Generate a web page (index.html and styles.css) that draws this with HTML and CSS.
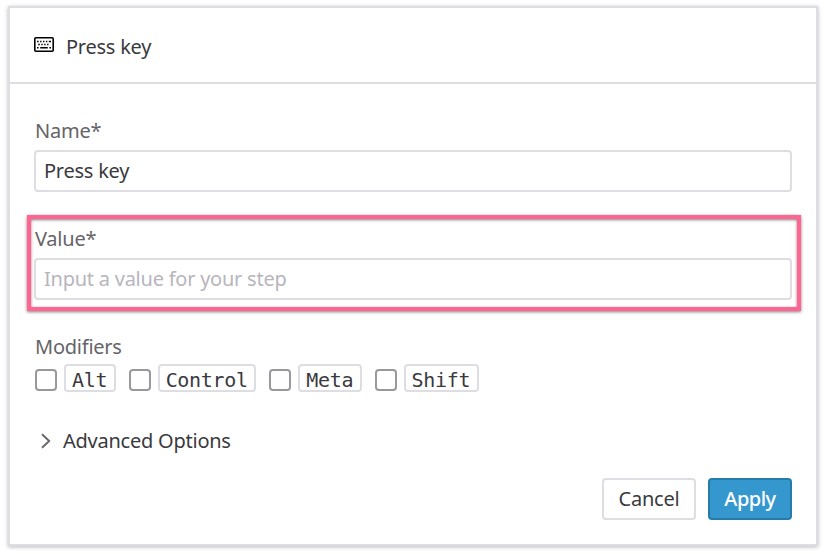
FILE: index.html
```html
<!DOCTYPE html>
<html lang="en">
<head>
<meta charset="utf-8">
<title>Press key</title>
<link rel="stylesheet" href="styles.css">
</head>
<body>
<form class="card">
  <header class="card-header">
    <svg class="keyboard" width="20" height="16" viewBox="0 0 20 16" aria-hidden="true">
      <rect x=".8" y=".8" width="18.4" height="13.4" rx="1" fill="none" stroke="#000" stroke-width="1.6"/>
      <path d="M3 4.5h1.6m1.5 0h1.4m1.5 0h1.4m1.5 0h1.4m1.5 0H17M4.2 7.5h1.6m1.5 0h1.4m1.5 0h1.4m1.5 0h1.4M3 10.8h1.6m1.6 0h7.6m1.6 0h1.6" fill="none" stroke="#000" stroke-width="1.5"/>
    </svg>
    <h1 class="title">Press key</h1>
  </header>
  <div class="card-body">
    <div class="field">
      <label class="label" for="name">Name*</label>
      <input class="input" id="name" type="text" value="Press key">
    </div>
    <div class="field highlighted">
      <label class="label" for="value">Value*</label>
      <input class="input" id="value" type="text" placeholder="Input a value for your step">
    </div>
    <div class="label">Modifiers</div>
    <div class="modifiers">
      <label class="modifier"><input class="check" type="checkbox"><kbd class="key">Alt</kbd></label>
      <label class="modifier"><input class="check" type="checkbox"><kbd class="key">Control</kbd></label>
      <label class="modifier"><input class="check" type="checkbox"><kbd class="key">Meta</kbd></label>
      <label class="modifier"><input class="check" type="checkbox"><kbd class="key">Shift</kbd></label>
    </div>
    <div class="advanced">
      <svg class="chevron" width="10" height="16" viewBox="0 0 10 16" aria-hidden="true"><path d="M1 1.2 8.2 8 1 14.8" fill="none" stroke="#66666a" stroke-width="1.9"/></svg>
      <span>Advanced Options</span>
    </div>
    <div class="actions">
      <button class="button" type="button">Cancel</button>
      <button class="button primary" type="button">Apply</button>
    </div>
  </div>
</form>
</body>
</html>
```
FILE: styles.css
```css
* { box-sizing: border-box; }
body {
  margin: 0;
  padding: 6px 6px 8px 8px;
  background: #fff;
  color: #3a393e;
  font: 20px/28px "Noto Sans", sans-serif;
  letter-spacing: -.24px;
}
.card {
  width: 810px;
  height: 540px;
  border: 2px solid #dddde3;
  box-shadow: 0 1px 4px rgba(0, 0, 0, .28);
}
.card-header {
  display: flex;
  align-items: center;
  height: 76px;
  padding: 4px 24px 0;
  border-bottom: 2px solid #dddde3;
}
.keyboard { margin: -4px 12px 0 0; }
.title { margin: 0; font-size: 20px; font-weight: 400; line-height: 28px; }
.card-body { padding: 33px 24px 0; }
.field { position: relative; margin-bottom: 33px; }
.label { display: block; height: 33px; padding-left: 1px; color: #656468; }
.input {
  display: block;
  width: 100%;
  height: 42px;
  padding: 0 8px 2px;
  border: 2px solid #dddde3;
  border-radius: 4px;
  background: #fff;
  color: #3a393e;
  font: inherit;
  letter-spacing: inherit;
}
.input::placeholder { color: #b8b5bc; opacity: 1; }
.highlighted::after {
  content: "";
  position: absolute;
  inset: -10px -9px -11px -7px;
  border: 4px solid #ff6492;
  box-shadow: 0 1px 3px rgba(0, 0, 0, .5), inset 0 1px 3px rgba(0, 0, 0, .5);
  pointer-events: none;
}
.modifiers { display: flex; gap: 13px; margin-top: -2px; padding-left: 1px; }
.modifier { display: flex; gap: 7px; }
.check {
  appearance: none;
  width: 22px;
  height: 22px;
  margin: 5px 0 0;
  border: 2px solid #99999d;
  border-radius: 4px;
  background: #fff;
}
.key {
  height: 28px;
  padding: 0 6.4px 0 6px;
  border: 2px solid #dddde3;
  border-radius: 4px;
  font: 20px/28px "DejaVu Sans Mono", monospace;
  letter-spacing: -.3px;
}
.advanced { display: flex; align-items: center; height: 28px; margin-top: 35px; padding-left: 7px; gap: 12px; }
.actions { display: flex; justify-content: flex-end; gap: 12px; margin-top: 23px; }
.button {
  width: 94px;
  height: 42px;
  padding: 0;
  border: 2px solid #dddde3;
  border-radius: 4px;
  background: #fff;
  color: #3a393e;
  font: inherit;
  letter-spacing: inherit;
}
.primary { width: 84px; border-color: #277ba8; background: #3498ce; color: #fff; font-weight: 500; letter-spacing: -.5px; }
```
